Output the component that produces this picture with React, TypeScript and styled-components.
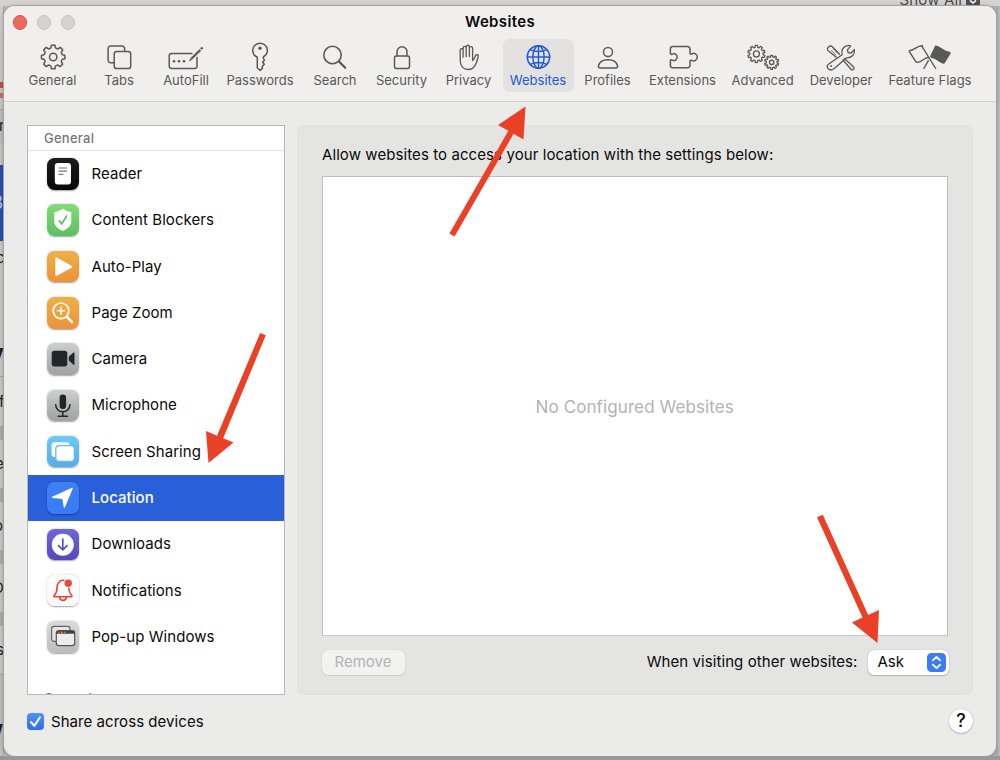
import React from "react";
import styled, { createGlobalStyle } from "styled-components";

const Global = createGlobalStyle`
  * { box-sizing: border-box; }
  html, body { margin: 0; padding: 0; background: #c4c3c2; }
  body { font-family: Inter, "Liberation Sans", sans-serif; -webkit-font-smoothing: antialiased; color: #0a0a0a; overflow: hidden; }
  button { font: inherit; border: 0; padding: 0; color: inherit; }
`;

const Desktop = styled.div`
  position: relative;
  width: 1000px;
  height: 760px;
  overflow: hidden;
  display: grid;
  grid-template-columns: 4px 992px 4px;
  grid-template-rows: 6px 750px 4px;
  background: linear-gradient(90deg, #bdbcbb 0, #c6c5c4 50%, #b4b4b4 100%);
`;
const TopStrip = styled.div`
  grid-column: 1 / 4;
  background: #d4d3d2;
  display: flex;
  justify-content: flex-end;
  gap: 4px;
  padding-right: 20px;
  overflow: hidden;
`;
const ShowAll = styled.span`
  font-size: 15px;
  line-height: 18px;
  margin-top: -9px;
  color: #4a4a4a;
  letter-spacing: 0.15px;
`;
const ShowBadge = styled.span`
  width: 14px;
  height: 14px;
  margin-top: -8px;
  border-radius: 2px;
  background: #505050;
  display: flex;
  svg { width: 14px; height: 14px; }
`;
const LeftStrip = styled.div`
  display: flex;
  flex-direction: column;
  overflow: hidden;
  border-right: 1px solid #a9a8a7;
`;
const Sliver = styled.div<{ h: number; bg: string; size?: number; fg?: string; bold?: boolean; dx?: number }>`
  flex: none;
  height: ${(p) => p.h}px;
  background: ${(p) => p.bg};
  color: ${(p) => p.fg || "#222"};
  font-size: ${(p) => p.size || 15}px;
  font-weight: ${(p) => (p.bold ? 700 : 400)};
  line-height: ${(p) => p.h}px;
  text-indent: ${(p) => p.dx || -4}px;
  white-space: nowrap;
  overflow: hidden;
`;
const RightStrip = styled.div`
  background: linear-gradient(90deg, #9f9f9f, #bcbcbc);
`;
const BottomStrip = styled.div`
  grid-column: 1 / 4;
  background: #989898;
`;

const Window = styled.main`
  border-radius: 11px;
  overflow: hidden;
  background: #ebebe9;
  box-shadow: 0 0 0 1px #a5a4a3, 0 1px 5px rgba(0, 0, 0, 0.35);
  display: flex;
  flex-direction: column;
`;
const Header = styled.header`
  height: 96px;
  flex: none;
  background: #f0efed;
  border-bottom: 1px solid #d2d1cf;
`;
const TitleBar = styled.div`
  height: 33px;
  display: grid;
  grid-template-columns: 120px 1fr 120px;
  align-items: center;
`;
const Lights = styled.div`
  display: flex;
  gap: 9.5px;
  padding-left: 9px;
`;
const Light = styled.span<{ on?: boolean }>`
  width: 14.4px;
  height: 14.4px;
  border-radius: 50%;
  background: ${(p) => (p.on ? "#ec6a5e" : "#d5d4d2")};
  border: 1px solid ${(p) => (p.on ? "#d95549" : "#c5c4c2")};
`;
const Title = styled.h1`
  margin: 0 0 1px;
  text-align: center;
  font-size: 15px;
  font-weight: 600;
  line-height: 20px;
  letter-spacing: 0.35px;
`;
const Tools = styled.nav`
  display: flex;
  padding-left: 16.5px;
`;
const Tool = styled.button<{ w: number; active?: boolean }>`
  width: ${(p) => p.w}px;
  height: 53px;
  flex: none;
  border-radius: 7px;
  background: ${(p) => (p.active ? "#e3e2e0" : "transparent")};
  color: ${(p) => (p.active ? "#2458dc" : "#595958")};
  display: flex;
  flex-direction: column;
  align-items: center;
  padding-top: 2px;
  font-size: 13px;
  line-height: 16px;
  white-space: nowrap;
`;
const ToolSvg = styled.svg`
  width: 48px;
  height: 31px;
  flex: none;
  fill: none;
  stroke: currentColor;
  stroke-width: 1.35;
  stroke-linecap: round;
  stroke-linejoin: round;
`;

const Body = styled.div`
  flex: 1;
  padding: 23px 23px 0 23px;
`;
const Columns = styled.div`
  display: flex;
  gap: 12px;
  height: 570px;
`;
const Sidebar = styled.aside`
  width: 258px;
  flex: none;
  background: #fff;
  border: 1px solid #b7b7b6;
  overflow: hidden;
`;
const GroupHeader = styled.div<{ line?: boolean }>`
  height: 25px;
  padding-left: 16px;
  font-size: 13px;
  font-weight: 500;
  line-height: 25px;
  letter-spacing: 0.25px;
  color: #777;
  border-bottom: ${(p) => (p.line ? "1px solid #dedede" : "0")};
`;
const NextGroup = styled(GroupHeader)`
  margin-top: 26px;
  letter-spacing: -0.1px;
`;
const Item = styled.div<{ selected?: boolean }>`
  height: 46.3px;
  display: flex;
  align-items: center;
  gap: 13px;
  padding-left: 19px;
  font-size: 15px;
  line-height: 18px;
  letter-spacing: 0.06px;
  font-weight: ${(p) => (p.selected ? 500 : 400)};
  background: ${(p) => (p.selected ? "#295fd9" : "transparent")};
  color: ${(p) => (p.selected ? "#fff" : "#0a0a0a")};
`;
const ItemName = styled.span`
  padding-bottom: 0.3px;
`;
const Tile = styled.span<{ bg: string }>`
  width: 31.5px;
  height: 31.5px;
  margin-bottom: 0.5px;
  border-radius: 7.5px;
  background: ${(p) => p.bg};
  box-shadow: 0 0.7px 1.6px rgba(0, 0, 0, 0.36);
  display: flex;
  svg { width: 31.5px; height: 31.5px; }
`;

const Panel = styled.section`
  flex: 1;
  background: #e4e4e2;
  border: 1px solid #e0e0de;
  border-radius: 7px;
  padding: 18px 24.5px 0 24px;
`;
const Intro = styled.p`
  margin: 0;
  font-size: 15px;
  line-height: 22px;
  letter-spacing: 0.085px;
`;
const SiteList = styled.div`
  margin-top: 10px;
  height: 460px;
  padding-top: 1px;
  background: #fff;
  border: 1px solid #bdbdbc;
  border-bottom-color: #c6c6c5;
  display: flex;
  align-items: center;
  justify-content: center;
  font-size: 17px;
  letter-spacing: 0.1px;
  color: #b3b3b3;
`;
const Actions = styled.div`
  margin-top: 13px;
  height: 26px;
  display: flex;
  align-items: center;
  font-size: 15px;
  line-height: 18px;
`;
const RemoveButton = styled.button`
  width: 83px;
  height: 25px;
  margin-left: -0.5px;
  border-radius: 6px;
  background: #f2f2f1;
  box-shadow: 0 0 1px rgba(0, 0, 0, 0.22), 0 1px 1px rgba(0, 0, 0, 0.08);
  color: #b4b4b3;
`;
const Caption = styled.span`
  margin-left: auto;
  margin-right: 10px;
  letter-spacing: 0.08px;
`;
const Select = styled.button`
  width: 81px;
  height: 25px;
  margin-right: -1px;
  border-radius: 6px;
  background: #fff;
  box-shadow: 0 0 1px rgba(0, 0, 0, 0.35), 0 1px 1.5px rgba(0, 0, 0, 0.2);
  display: flex;
  align-items: center;
  justify-content: space-between;
  padding: 0 2.5px 0 10px;
  svg { width: 19px; height: 19px; }
`;
const Footer = styled.footer`
  height: 52px;
  display: flex;
  align-items: center;
  justify-content: space-between;
  font-size: 15px;
`;
const Share = styled.label`
  display: flex;
  align-items: center;
  gap: 7px;
  letter-spacing: 0.05px;
`;
const Check = styled.span`
  width: 17px;
  height: 17px;
  border-radius: 4px;
  background: linear-gradient(#4c93f8, #2f6df0);
  display: flex;
  svg { width: 17px; height: 17px; }
`;
const Help = styled.button`
  width: 24px;
  height: 24px;
  border-radius: 50%;
  background: #fff;
  box-shadow: 0 0 1px rgba(0, 0, 0, 0.35), 0 1px 1.5px rgba(0, 0, 0, 0.2);
  font-size: 18px;
  font-weight: 500;
  line-height: 24px;
`;
const Arrows = styled.svg`
  position: absolute;
  inset: 0;
  width: 1000px;
  height: 760px;
  pointer-events: none;
  fill: #ea4025;
  stroke: none;
`;

function gear(cx: number, cy: number, r: number, depth: number, teeth: number) {
  const pts: string[] = [];
  const step = (Math.PI * 2) / teeth;
  const at = (a: number, rad: number) =>
    `${(cx + Math.cos(a) * rad).toFixed(2)} ${(cy + Math.sin(a) * rad).toFixed(2)}`;
  for (let i = 0; i < teeth; i++) {
    const a = i * step - Math.PI / 2;
    pts.push(`${i ? "L" : "M"}${at(a - step * 0.2, r)}`);
    pts.push(`A${r} ${r} 0 0 1 ${at(a + step * 0.2, r)}`);
    pts.push(`L${at(a + step * 0.31, r - depth)}`);
    pts.push(`Q${at(a + step * 0.5, r - depth - 0.5)} ${at(a + step * 0.69, r - depth)}`);
  }
  return pts.join("") + "Z";
}

const icons: Record<string, React.ReactNode> = {
  General: (
    <>
      <path d={gear(24.2, 16, 11.8, 2.4, 8)} strokeWidth="1.5" />
      <circle cx="24.2" cy="16" r="3.7" strokeWidth="1.5" />
    </>
  ),
  Tabs: (
    <>
      <path d="M19.2 21.7H15.7a2.6 2.6 0 0 1-2.6-2.6V7.6A2.6 2.6 0 0 1 15.7 5H27a2.6 2.6 0 0 1 2.6 2.6v2.6" strokeWidth="1.5" />
      <rect x="19.2" y="10.5" width="16.5" height="17" rx="2.6" strokeWidth="1.5" />
    </>
  ),
  AutoFill: (
    <>
      <path d="M30 12.4H9.6A2.4 2.4 0 0 0 7.2 14.8V25a2.4 2.4 0 0 0 2.4 2.4H32.6A2.4 2.4 0 0 0 35 25V16.5" strokeWidth="1.5" />
      <path d="M27.5 19.8l1.6-3.1L37.4 8.4l1.4 1.4-8.3 8.3z" fill="currentColor" strokeWidth=".5" />
      <circle cx="39.7" cy="7.3" r="1.2" fill="currentColor" stroke="none" />
      <g fill="currentColor" stroke="none">
        <circle cx="12" cy="20.3" r="1.3" />
        <circle cx="17" cy="20.3" r="1.3" />
        <circle cx="22" cy="20.3" r="1.3" />
      </g>
    </>
  ),
  Passwords: (
    <>
      <path d="M21.3 16.2a7.300 7.300 0 1 1 6-.2v1.400l1.200 1.700-1.900 2.100 1.700 2-2 2.400v1.800L24.200 29.500 21.300 27z" strokeWidth="1.5" />
      <circle cx="24" cy="7.3" r="1.7" fill="currentColor" stroke="none" />
    </>
  ),
  Search: (
    <>
      <circle cx="21.5" cy="14" r="8.7" strokeWidth="1.6" />
      <path d="M28 20.5l6.2 6.2" strokeWidth="2.3" />
    </>
  ),
  Security: (
    <>
      <rect x="16.5" y="15" width="15" height="12.4" rx="1.8" strokeWidth="1.5" />
      <path d="M19 15v-4.2a5 5 0 0 1 10 0V15" strokeWidth="1.5" />
    </>
  ),
  Privacy: (
    <path
      strokeWidth="1.3"
      d="M15.200 9.200c0-2 2.900-2 2.900 0V16M18.100 9V7c0-2.200 3.100-2.200 3.100 0v8.500M21.200 7V5.900c0-2.200 3.200-2.200 3.200 0v9.600M24.400 7.300c0-2.200 3.200-2.200 3.200 0v12.200c1.200-.4 2-2.800 3-4.900.9-1.800 3.200-1 2.600 1.100-1.500 5.500-3 12.800-9.700 12.800-5.300 0-8.300-3.300-8.300-9.300V9.200"
    />
  ),
  Websites: (
    <g strokeWidth="1.45">
      <circle cx="24.5" cy="16" r="11.2" />
      <ellipse cx="24.5" cy="16" rx="5.6" ry="11.2" />
      <path d="M24.5 4.800v22.400M13.300 16h22.400M16.200 8.600c4.600 2.500 12 2.500 16.600 0M16.200 23.400c4.600-2.500 12-2.500 16.600 0" />
    </g>
  ),
  Profiles: (
    <g strokeWidth="1.5">
      <circle cx="24" cy="11" r="4.5" />
      <path d="M16.300 26.900c-1.500 0-2.200-1-1.800-2.400 1-3.400 4.800-5.800 9.500-5.800s8.500 2.400 9.500 5.800c.4 1.400-.3 2.400-1.800 2.400z" />
    </g>
  ),
  Extensions: (
    <path
      strokeWidth="1.5"
      d="M11.400 12.600V7.800A2.300 2.300 0 0 1 13.700 5.500H28.700A2.300 2.300 0 0 1 31 7.800V12c0 1.200 1 1.500 1.800.9 2.500-1.600 5.500.2 5.500 3.200s-3 4.800-5.500 3.200c-.8-.6-1.800-.3-1.800.9V24.400A2.300 2.300 0 0 1 28.700 26.700H13.700A2.300 2.300 0 0 1 11.400 24.400V19.300c.4-.7 1.200-.7 2-.2 2.300 1.300 4.700-.3 4.700-3s-2.400-4.300-4.700-3c-.8.5-1.600.3-2-.5z"
    />
  ),
  Advanced: (
    <g strokeWidth="1.3">
      <path d={gear(17.4, 12.9, 8.6, 1.8, 10)} />
      <circle cx="17.4" cy="12.9" r="3" />
      <path d={gear(32.7, 21.3, 7, 1.5, 10)} />
      <circle cx="32.7" cy="21.3" r="2.2" />
    </g>
  ),
  Developer: (
    <g strokeWidth="1.3">
      <path d="M19.200 16.200L11.200 9.800c-1.200-1.100-1-2.400.2-3.600s2.700-1.500 3.900-.4l7.200 7.500M27.300 17.600l8.900 7.900c1.100 1 1.100 2 .3 2.800s-1.900.8-2.800-.3l-7.700-9" />
      <path d="M14.300 9.600l4.600 4.400M16.300 7.800l4.300 4.400" strokeWidth=".9" />
      <path d="M11.500 23.300l13.600-9.600c-.8-3.900.8-7.500 4.200-8.800 1.700-.6 3.100-.6 4.400-.1l-3.300 4 .7 2.700 2.700.7 3.600-3.700c.7 4.700-2.700 8.600-7.800 8.300L17.300 27.400c-1.700 2-4.600 2.100-6.100.4s-1.400-3.300.3-4.500z" />
      <circle cx="14.2" cy="25" r="1" fill="currentColor" stroke="none" />
    </g>
  ),
  "Feature Flags": (
    <g strokeWidth="1.4">
      <path d="M29.700 27.500L15.800 5.100M23.300 16.600c-5.500-.7-7 4.900-11.500 4.700-1 0-1.500-.1-2-.6L3.500 10.800c-.3-.7 0-1.200.7-1.300 5-.4 6.500-5.200 12.300-4.800" />
      <path d="M22.300 19.600l-4.400 7.900" />
      <path d="M29.600 5.300c4.400-.2 7.100 5.400 13.300 5.900.9.100 1.300.7.800 1.500l-5.300 8.700c-.4.600-.9.700-1.500.5-4.700-1.400-6.600-5.300-11.100-5.600-.9-.1-1.100-.8-.7-1.500z" fill="currentColor" />
    </g>
  ),
};

const tools: [string, number][] = [
  ["General", 64],
  ["Tabs", 69],
  ["AutoFill", 65],
  ["Passwords", 83],
  ["Search", 67],
  ["Security", 66],
  ["Privacy", 68],
  ["Websites", 71],
  ["Profiles", 68],
  ["Extensions", 82],
  ["Advanced", 78],
  ["Developer", 79],
  ["Feature Flags", 99],
];

const grey = "linear-gradient(#cbcfce, #a0a1a1)";
const orange = "linear-gradient(#efb046, #ec9138)";

const items: { name: string; bg: string; art: React.ReactNode }[] = [
  {
    name: "Reader", bg: "linear-gradient(#1c1c1d, #080808)",
    art: (
      <>
        <rect x="7.8" y="5" width="16.2" height="21.5" rx="3" fill="#fff" />
        <path d="M11.600 10h8.400M11.600 13.200h8.400M11.600 16.400h4.800" stroke="#777" strokeWidth="1.2" />
      </>
    ),
  },
  {
    name: "Content Blockers", bg: "linear-gradient(#83dc75, #5dbf60)",
    art: (
      <>
        <path d="M15.800 4.600c2.300 2 5 3 8.500 3.400v9.500c0 4.500-4 7.500-8.500 9.600-4.500-2.100-8.500-5.100-8.500-9.600V8c3.500-.4 6.200-1.400 8.500-3.400z" fill="#fff" />
        <path d="M11.700 16.200l3 3.700 5.300-8.600" fill="none" stroke="#55bb5b" strokeWidth="1.6" />
      </>
    ),
  },
  {
    name: "Auto-Play", bg: orange,
    art: <path d="M9.200 7.200v17.200l15.400-8.600z" fill="#fff" stroke="#fff" strokeWidth="1.6" strokeLinejoin="round" />,
  },
  {
    name: "Page Zoom", bg: orange,
    art: (
      <g fill="none" stroke="#fff" strokeLinecap="round">
        <circle cx="14" cy="13.8" r="7.8" strokeWidth="1.7" />
        <path d="M10.500 13.800h7M14 10.300v7" strokeWidth="1.5" />
        <path d="M20.300 20.200l4.700 5" strokeWidth="2.5" />
      </g>
    ),
  },
  {
    name: "Camera", bg: grey,
    art: (
      <g fill="#232526">
        <rect x="4.7" y="7.8" width="15.6" height="15.6" rx="2.6" />
        <path d="M21.800 13.700l4.300-4c.6-.6 1.400-.3 1.400.6v10.600c0 .9-.8 1.200-1.400.6l-4.300-4z" />
      </g>
    ),
  },
  {
    name: "Microphone", bg: grey,
    art: (
      <>
        <rect x="12.6" y="4.6" width="6.5" height="14.4" rx="3.25" fill="#232526" />
        <path d="M8.700 14.800c0 9.300 14.200 9.300 14.200 0M15.800 22v4M11.300 26.200h9" fill="none" stroke="#232526" strokeWidth="1.5" strokeLinecap="round" />
      </>
    ),
  },
  {
    name: "Screen Sharing", bg: "linear-gradient(#6bcaf6, #58abe8)",
    art: (
      <>
        <rect x="4.6" y="6.3" width="18" height="14.6" rx="3" fill="#fff" />
        <rect x="8.8" y="9.7" width="18.6" height="15.6" rx="3.2" fill="#fff" stroke="#62bbee" strokeWidth="1.3" />
      </>
    ),
  },
  {
    name: "Location", bg: "linear-gradient(#3f80f4, #377cf6)",
    art: <path d="M25.200 6.300L17.300 25.200 15.900 16.500 5.500 15.300z" fill="#fff" stroke="#fff" strokeWidth="1.2" strokeLinejoin="round" />,
  },
  {
    name: "Downloads", bg: "linear-gradient(#6e67da, #5248c2)",
    art: (
      <>
        <circle cx="15.8" cy="15.7" r="11" fill="#fff" />
        <path d="M15.800 10v10.500M11.500 16.600l4.300 4.300 4.300-4.300" fill="none" stroke="#574ec8" strokeWidth="1.7" strokeLinecap="round" strokeLinejoin="round" />
      </>
    ),
  },
  {
    name: "Notifications", bg: "linear-gradient(#fff, #f8f8f8)",
    art: (
      <>
        <path d="M16.800 5.300c-4.700-.3-6.700 3.500-6.700 7.200 0 5-1.600 6.600-3.100 8.300-.4.500-.2.900.4.900h17c.6 0 .8-.4.400-.9-1.400-1.700-2.800-3.300-2.900-7.600M12.500 22.500c.8 3.800 6.200 3.800 7 0" fill="none" stroke="#e5473a" strokeWidth="1.6" strokeLinecap="round" />
        <circle cx="21.2" cy="8.2" r="3.7" fill="#e9483c" />
      </>
    ),
  },
  {
    name: "Pop-up Windows", bg: "linear-gradient(#dadada, #bcbcbc)",
    art: (
      <>
        <rect x="4.6" y="5.3" width="18.4" height="15" rx="2.6" fill="#e4e4e4" stroke="#666" strokeWidth="1.2" />
        <rect x="9.3" y="9.7" width="18.4" height="15" rx="2.6" fill="#ededed" stroke="#555" strokeWidth="1.2" />
        <path d="M9.300 12.800v-1a2.100 2.100 0 0 1 2.100-2.100h14.200a2.100 2.100 0 0 1 2.100 2.100v1z" fill="#444" />
        <circle cx="12" cy="11.5" r=".9" fill="#e8573f" />
        <circle cx="14.8" cy="11.5" r=".9" fill="#e5a03a" />
        <circle cx="17.6" cy="11.5" r=".9" fill="#4caf62" />
      </>
    ),
  },
];

export default function App() {
  return (
    <Desktop>
      <Global />
      <TopStrip>
        <ShowAll>Show All</ShowAll>
        <ShowBadge>
          <svg viewBox="0 0 14 14">
            <path d="M4 8.500l3 2.500 3-2.500" fill="none" stroke="#fff" strokeWidth="1.6" />
          </svg>
        </ShowBadge>
      </TopStrip>
      <LeftStrip>
        <Sliver h={27} bg="#cfcecd" />
        <Sliver h={49} bg="#c9c8c7" />
        <Sliver h={6} bg="#c4503c" />
        <Sliver h={5} bg="#c9c8c7" />
        <Sliver h={5} bg="#c96e5e" />
        <Sliver h={11} bg="#c9c8c7" />
        <Sliver h={1} bg="#a9a8a7" />
        <Sliver h={32} bg="#bfbebd" dx={-1}>r</Sliver>
        <Sliver h={23} bg="#c4c3c2" />
        <Sliver h={76} bg="#2450b4" fg="#b9c7ec" size={18} dx={-8}>8</Sliver>
        <Sliver h={34} bg="#c9c8c7">c</Sliver>
        <Sliver h={57} bg="#c9c8c7" />
        <Sliver h={44} bg="#c9c8c7" size={30} bold dx={-14}>y</Sliver>
        <Sliver h={1} bg="#a9a8a7" />
        <Sliver h={49} bg="#c9c8c7" dx={-1}>f</Sliver>
        <Sliver h={14} bg="#adacab" />
        <Sliver h={48} bg="#c9c8c7" dx={-5}>e</Sliver>
        <Sliver h={14} bg="#adacab" />
        <Sliver h={48} bg="#c9c8c7" dx={-6}>o</Sliver>
        <Sliver h={14} bg="#adacab" />
        <Sliver h={48} bg="#c9c8c7" dx={-7}>D</Sliver>
        <Sliver h={14} bg="#adacab" />
        <Sliver h={48} bg="#c9c8c7" dx={-4}>s</Sliver>
        <Sliver h={1} bg="#a9a8a7" />
        <Sliver h={110} bg="#bfbebd" size={26} bold dx={-19}>w</Sliver>
      </LeftStrip>
      <Window>
        <Header>
          <TitleBar>
            <Lights>
              <Light on />
              <Light />
              <Light />
            </Lights>
            <Title>Websites</Title>
          </TitleBar>
          <Tools>
            {tools.map(([name, w]) => (
              <Tool key={name} w={w} active={name === "Websites"}>
                <ToolSvg viewBox="0 0 48 31">{icons[name]}</ToolSvg>
                <span>{name}</span>
              </Tool>
            ))}
          </Tools>
        </Header>
        <Body>
          <Columns>
            <Sidebar>
              <GroupHeader line>General</GroupHeader>
              {items.map((it) => (
                <Item key={it.name} selected={it.name === "Location"}>
                  <Tile bg={it.bg}>
                    <svg viewBox="0 0 31.5 31.5">{it.art}</svg>
                  </Tile>
                  <ItemName>{it.name}</ItemName>
                </Item>
              ))}
              <NextGroup>General</NextGroup>
            </Sidebar>
            <Panel>
              <Intro>Allow websites to access your location with the settings below:</Intro>
              <SiteList>No Configured Websites</SiteList>
              <Actions>
                <RemoveButton>Remove</RemoveButton>
                <Caption>When visiting other websites:</Caption>
                <Select>
                  <span>Ask</span>
                  <svg viewBox="0 0 19 19">
                    <rect width="19" height="19" rx="4.5" fill="#3b7df3" />
                    <path d="M5.800 7.400l3.700-3.500 3.700 3.500M5.800 11.600l3.700 3.500 3.700-3.500" fill="none" stroke="#fff" strokeWidth="1.8" strokeLinecap="round" strokeLinejoin="round" />
                  </svg>
                </Select>
              </Actions>
            </Panel>
          </Columns>
          <Footer>
            <Share>
              <Check>
                <svg viewBox="0 0 17 17">
                  <path d="M4 9l3.300 3.900L13 4.300" fill="none" stroke="#fff" strokeWidth="2" strokeLinecap="round" strokeLinejoin="round" />
                </svg>
              </Check>
              Share across devices
            </Share>
            <Help>?</Help>
          </Footer>
        </Body>
      </Window>
      <RightStrip />
      <BottomStrip />
      <Arrows viewBox="0 0 1000 760">
        <path d="M525.500 106.500L523.500 139.500 513.600 133.700 454.600 236.600 449.400 233.400 508.400 130.700 498 125z" />
        <path d="M208.500 463L206 431 217 435.700 260.200 333 265.800 335.300 223.200 438.300 233.500 442.500z" />
        <path d="M877.500 643L852 622.500 862.500 617.600 817 517.300 822.800 514.700 868.200 615 879 610z" />
      </Arrows>
    </Desktop>
  );
}
